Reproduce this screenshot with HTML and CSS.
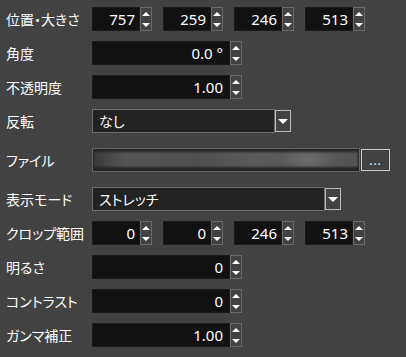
FILE: index.html
```html
<!DOCTYPE html>
<html lang="ja">
<head>
    <meta charset="UTF-8">
    <title>Properties</title>
    <link rel="stylesheet" href="styles.css">
</head>
<body>
    <div class="panel">
        <div class="row">
            <span class="label">位置・大きさ</span>
            <div class="field"><div class="num">757</div><div class="spin"><i class="up"></i><i class="down"></i></div></div>
            <div class="field"><div class="num">259</div><div class="spin"><i class="up"></i><i class="down"></i></div></div>
            <div class="field"><div class="num">246</div><div class="spin"><i class="up"></i><i class="down"></i></div></div>
            <div class="field"><div class="num">513</div><div class="spin"><i class="up"></i><i class="down"></i></div></div>
        </div>
        <div class="row">
            <span class="label">角度</span>
            <div class="field"><div class="num wide">0.0 °</div><div class="spin"><i class="up"></i><i class="down"></i></div></div>
        </div>
        <div class="row">
            <span class="label">不透明度</span>
            <div class="field"><div class="num wide">1.00</div><div class="spin"><i class="up"></i><i class="down"></i></div></div>
        </div>
        <div class="row">
            <span class="label">反転</span>
            <div class="select short">なし</div>
            <div class="drop"><i class="down"></i></div>
        </div>
        <div class="row file-row">
            <span class="label">ファイル</span>
            <div class="file"><div class="blur"></div></div>
            <div class="browse">...</div>
        </div>
        <div class="row">
            <span class="label">表示モード</span>
            <div class="select long">ストレッチ</div>
            <div class="drop"><i class="down"></i></div>
        </div>
        <div class="row">
            <span class="label">クロップ範囲</span>
            <div class="field"><div class="num">0</div><div class="spin"><i class="up"></i><i class="down"></i></div></div>
            <div class="field"><div class="num">0</div><div class="spin"><i class="up"></i><i class="down"></i></div></div>
            <div class="field"><div class="num">246</div><div class="spin"><i class="up"></i><i class="down"></i></div></div>
            <div class="field"><div class="num">513</div><div class="spin"><i class="up"></i><i class="down"></i></div></div>
        </div>
        <div class="row">
            <span class="label">明るさ</span>
            <div class="field"><div class="num wide">0</div><div class="spin"><i class="up"></i><i class="down"></i></div></div>
        </div>
        <div class="row">
            <span class="label">コントラスト</span>
            <div class="field"><div class="num wide">0</div><div class="spin"><i class="up"></i><i class="down"></i></div></div>
        </div>
        <div class="row">
            <span class="label">ガンマ補正</span>
            <div class="field"><div class="num wide">1.00</div><div class="spin"><i class="up"></i><i class="down"></i></div></div>
        </div>
    </div>
</body>
</html>
```

FILE: styles.css
```css
*{
    margin: 0;
    padding: 0;
    box-sizing: border-box;
}
body{
    background-color: #424242;
    color: #fff;
    font-family: "Noto Sans CJK JP", "Noto Sans", sans-serif;
    font-size: 13px;
}
.panel{
    padding: 7px 0 0 6px;
}
.row{
    display: flex;
    align-items: center;
    height: 24px;
    margin-bottom: 10px;
}
.label{
    width: 86px;
    flex-shrink: 0;
    font-size: 14px;
    font-feature-settings: "palt";
    white-space: nowrap;
}
.field{
    display: flex;
    margin-right: 11px;
}
.num{
    width: 48px;
    height: 24px;
    background-color: #111;
    border: 1px solid #1c1c1c;
    text-align: right;
    padding-right: 4px;
    font-family: "Noto Sans", sans-serif;
    font-size: 15px;
    line-height: 22px;
}
.num.wide{
    width: 138px;
    padding-right: 6px;
}
.spin{
    width: 12px;
    height: 24px;
    border: 1px solid #6a6a6a;
    display: flex;
    flex-direction: column;
    justify-content: space-between;
    align-items: center;
    padding: 4px 0 3px;
}
.up{
    width: 0;
    height: 0;
    border-left: 4px solid transparent;
    border-right: 4px solid transparent;
    border-bottom: 4px solid #fff;
}
.down{
    width: 0;
    height: 0;
    border-left: 4px solid transparent;
    border-right: 4px solid transparent;
    border-top: 4px solid #fff;
}
.select{
    height: 24px;
    background-color: #222;
    border: 1px solid #6e6e6e;
    padding-left: 6px;
    line-height: 22px;
    font-size: 14px;
    font-feature-settings: "palt";
}
.select.short{
    width: 183px;
}
.select.long{
    width: 233px;
}
.drop{
    width: 16px;
    height: 22px;
    border: 1px solid #bdbdbd;
    display: flex;
    justify-content: center;
    align-items: center;
}
.drop .down{
    border-left-width: 5px;
    border-right-width: 5px;
    border-top-width: 5px;
}
.file-row{
    margin-top: 15px;
    margin-bottom: 15px;
}
.file{
    width: 268px;
    height: 24px;
    border: 1px solid #666;
    background-color: #262626;
    padding: 3px 1px 4px 1px;
}
.blur{
    height: 15px;
    background: radial-gradient(ellipse 30px 14px at 214px 50%, #6e6e6e, transparent),
        linear-gradient(90deg, #3a3a3a 0%, #555 12%, #505050 40%, #5a5a5a 60%, #545454 100%);
    filter: blur(1px);
}
.browse{
    width: 29px;
    height: 22px;
    margin-left: 1px;
    border: 1px solid #c8c8c8;
    text-align: center;
    font-family: "Noto Sans", sans-serif;
    font-size: 12px;
    line-height: 22px;
    letter-spacing: 1px;
}
```
